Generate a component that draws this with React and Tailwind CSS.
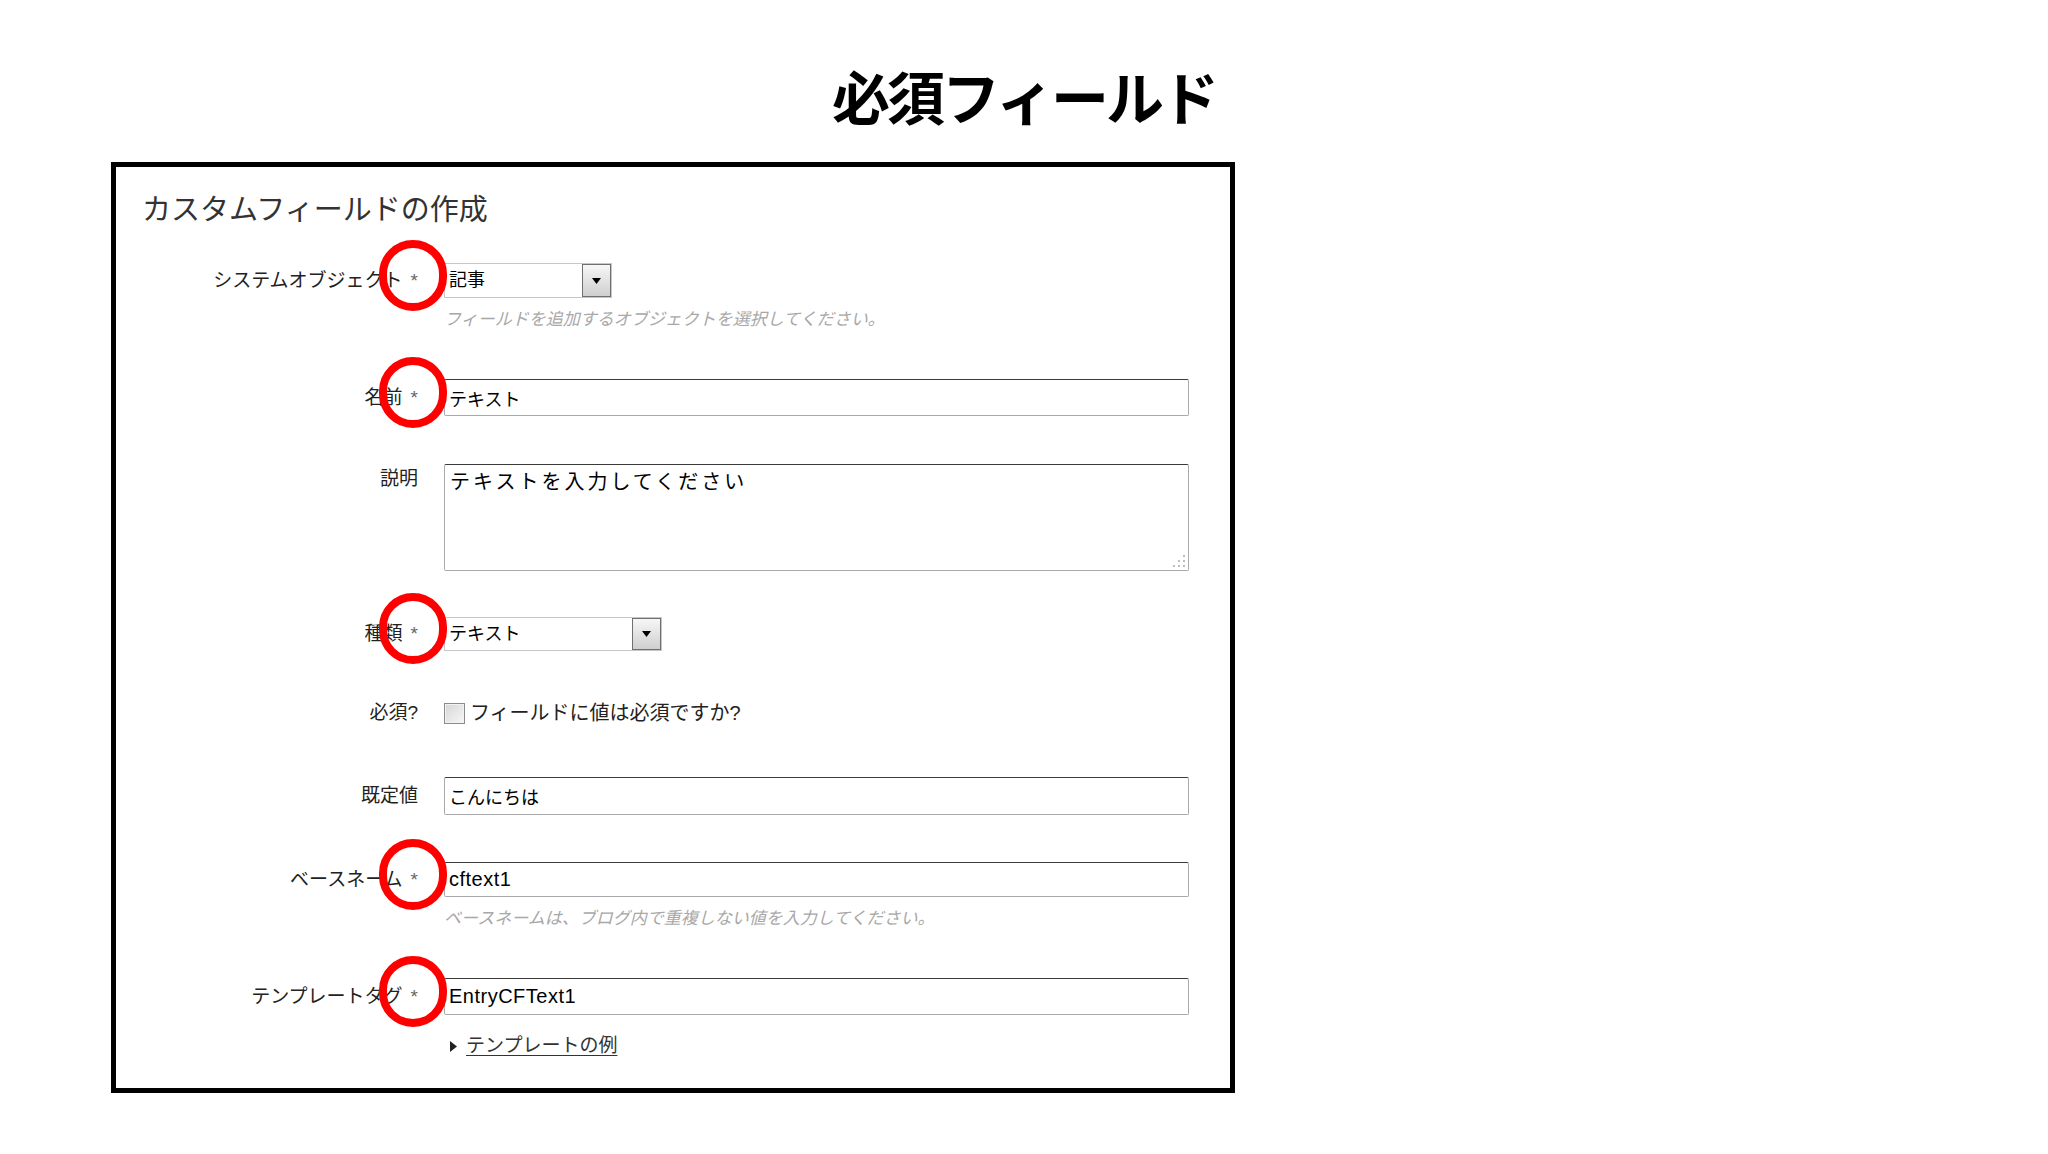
import React from 'react';
import clsx from 'clsx';

// red ring drawn over the required-field asterisk
function Mark() {
  return (
    <span className="pointer-events-none absolute left-[263px] top-1/2 z-10 -mt-[41px] h-[71px] w-[68px] rounded-full border-[8px] border-[#f00]" />
  );
}

function Row({ label, required, marked, alignTop, className, children }) {
  return (
    <div className={clsx('relative flex', alignTop ? 'items-start' : 'items-center', className)}>
      <div
        className={clsx(
          'w-[302px] shrink-0 text-right text-[19px] leading-[20px] text-[#222]',
          alignTop && 'pt-[5px]'
        )}
      >
        {label}
        {required && <span className="ml-[8px] text-[#666]">*</span>}
      </div>
      <div className="ml-[26px]">{children}</div>
      {marked && <Mark />}
    </div>
  );
}

function TextInput({ value, className }) {
  return (
    <input
      readOnly
      value={value}
      className={clsx(
        'block w-[745px] rounded-[2px] border border-[#aaa] border-t-[#3a3a3a] bg-white px-[4px] text-black outline-none',
        className
      )}
    />
  );
}

function Select({ value, className }) {
  return (
    <div className={clsx('flex items-stretch border border-[#c6c6c6] bg-white', className)}>
      <span className="flex flex-1 items-center pl-[4px] text-[18px] text-black">{value}</span>
      <span className="flex w-[29px] items-center justify-center border border-[#6f6f6f] bg-linear-to-b from-[#f7f7f7] to-[#cfcfcf]">
        <svg width="9" height="6" viewBox="0 0 9 6">
          <path d="M0 0h9L4.5 6z" fill="#000" />
        </svg>
      </span>
    </div>
  );
}

function Hint({ children, className }) {
  return (
    <p className={clsx('pl-[328px] text-[17px] leading-[20px] text-[#a8a8a8] italic', className)}>
      {children}
    </p>
  );
}

export default function App() {
  return (
    <div className="h-[1154px] w-[2048px] overflow-hidden bg-white font-['Liberation_Sans','Noto_Sans_CJK_JP',sans-serif]">
      <h1 className="pt-[66px] text-center font-['Noto_Sans_CJK_JP',sans-serif] text-[58px] leading-[58px] font-bold tracking-[-3px] text-black">
        必須フィールド
      </h1>

      <div className="mt-[38px] ml-[111px] h-[931px] w-[1124px] border-[5px] border-black bg-white">
        <h2 className="pt-[28px] pl-[26px] text-[29px] leading-[30px] font-normal text-[#333]">
          カスタムフィールドの作成
        </h2>

        <div className="flex flex-col">
          <Row label="システムオブジェクト" required marked className="mt-[38px]">
            <Select value="記事" className="h-[35px] w-[168px]" />
          </Row>
          <Hint className="mt-[12px]">フィールドを追加するオブジェクトを選択してください。</Hint>

          <Row label="名前" required marked className="mt-[49px]">
            <TextInput value="テキスト" className="h-[37px] text-[18px]" />
          </Row>

          <Row label="説明" alignTop className="mt-[48px]">
            <div className="relative">
              <textarea
                readOnly
                value="テキストを入力してください"
                className="block h-[107px] w-[745px] resize-none rounded-[2px] border border-[#aaa] border-t-[#3a3a3a] bg-white px-[5px] pt-[3px] text-[20px] leading-[28px] tracking-[3px] text-black outline-none"
              />
              <svg className="absolute right-[3px] bottom-[3px]" width="14" height="14" viewBox="0 0 14 14">
                <g fill="#bdbdbd">
                  <rect x="11" y="1" width="2" height="2" />
                  <rect x="6" y="6" width="2" height="2" />
                  <rect x="11" y="6" width="2" height="2" />
                  <rect x="1" y="11" width="2" height="2" />
                  <rect x="6" y="11" width="2" height="2" />
                  <rect x="11" y="11" width="2" height="2" />
                </g>
              </svg>
            </div>
          </Row>

          <Row label="種類" required marked className="mt-[46px]">
            <Select value="テキスト" className="h-[34px] w-[218px]" />
          </Row>

          <Row label="必須?" className="mt-[51px] h-[22px]">
            <label className="flex items-center gap-[5px] text-[20px] text-[#222]">
              <span className="block h-[21px] w-[21px] border border-[#8c8c8c] bg-linear-to-br from-[#d6d6d6] to-[#f7f7f7] shadow-[inset_0_0_0_1px_#f2f2f2]" />
              フィールドに値は必須ですか?
            </label>
          </Row>

          <Row label="既定値" className="mt-[53px]">
            <TextInput value="こんにちは" className="h-[38px] text-[18px]" />
          </Row>

          <Row label="ベースネーム" required marked className="mt-[47px]">
            <TextInput value="cftext1" className="h-[35px] text-[20px] tracking-[0.5px]" />
          </Row>
          <Hint className="mt-[12px]">ベースネームは、ブログ内で重複しない値を入力してください。</Hint>

          <Row label="テンプレートタグ" required marked className="mt-[49px]">
            <TextInput value="EntryCFText1" className="h-[37px] text-[20px] tracking-[0.5px]" />
          </Row>

          <div className="mt-[21px] flex items-center gap-[9px] pl-[334px] text-[19px] leading-[20px] text-[#333]">
            <svg width="7" height="11" viewBox="0 0 7 11">
              <path d="M0 0l7 5.5L0 11z" fill="#222" />
            </svg>
            <a className="underline underline-offset-[3px]">テンプレートの例</a>
          </div>
        </div>
      </div>
    </div>
  );
}
